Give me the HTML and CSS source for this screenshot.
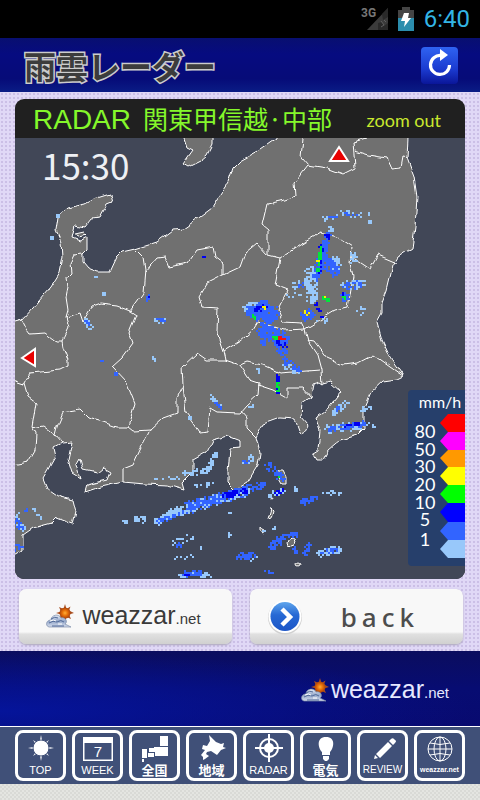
FILE: index.html
```html
<!DOCTYPE html>
<html lang="ja">
<head>
<meta charset="UTF-8">
<meta name="viewport" content="width=device-width">
<title>雨雲レーダー</title>
<link rel="stylesheet" href="styles.css">
</head>
<body>

<svg class="defs" width="0" height="0" aria-hidden="true">
	<defs>
		<radialGradient id="sunFill"><stop offset="0" stop-color="#ffae35"/><stop offset=".5" stop-color="#e87008"/><stop offset="1" stop-color="#a8430c"/></radialGradient>
		<linearGradient id="cloudFill" x1="0" y1="0" x2="0" y2="1"><stop offset="0" stop-color="#e6edf6"/><stop offset=".5" stop-color="#94a7c9"/><stop offset="1" stop-color="#d5dded"/></linearGradient>
		<linearGradient id="arrowFill" x1="0" y1="0" x2="0" y2="1"><stop offset="0" stop-color="#5fa5ec"/><stop offset=".45" stop-color="#2668d4"/><stop offset="1" stop-color="#1c55c6"/></linearGradient>
	</defs>
	<symbol id="weather" viewBox="0 0 28 25">
		<path d="M19 0l1.500 5 4-2.500-1.500 4L28 9l-5 1.500 2 4.500-4.500-2L19 18l-1.500-5-4.500 2 2-4.500L10 9l5-1.500-2-4.500 4.500 2z" fill="#a94e20"/>
		<circle cx="19" cy="9" r="5.500" fill="url(#sunFill)"/>
		<path d="M3 23C-1 22 0 16 5 16c0-5 8-7 10-2 5-1 7 4 4 6l6 3z" fill="url(#cloudFill)" stroke="#7e8eab" stroke-width=".7"/>
		<path d="M3 19q4-3 8-1 4-3 7 0M5 15q4-3 7-1M6 22h12" fill="none" stroke="#536b99" stroke-width="1"/>
		<path d="M4 17q4-2 6 0M12 20h4" fill="none" stroke="#fff" stroke-width="1"/>
	</symbol>
</svg>

<div class="status">
	<svg class="signal" width="28" height="26" viewBox="0 0 28 26" aria-label="3G">
		<text x="0" y="11">3G</text>
		<path d="M27 2v22H6z" fill="#3b3b3b"/>
		<path d="M27 2v9l-5 3-1-6zM17 24v-7l4-1 2 4 4-3v7z" fill="#292929"/>
		<path d="M20 15l3 4M23 14l2 2M20 21l3-2" stroke="#606060"/>
	</svg>
	<svg class="battery" width="16" height="24" viewBox="0 0 16 24" aria-hidden="true">
		<path d="M4 0h8v3h4v8H0V3h4z" fill="#454545"/>
		<path d="M0 11h16v13H0z" fill="#2b8dad"/>
		<path d="M6 6h5l-1 5h3l-7 9 1-6H3z" fill="#fff"/>
	</svg>
	<span class="clock">6:40</span>
</div>

<header class="header">
	<h1>雨雲レーダー</h1>
	<button type="button" class="reload" aria-label="再読み込み">
		<svg width="24" height="28" viewBox="0 0 24 28" aria-hidden="true">
			<path d="M13 6.500A9.500 9.500 0 1 0 21.500 16" fill="none" stroke="#fff" stroke-width="3.200"/>
			<path d="M12 0l8 6-8 6z" fill="#fff"/>
		</svg>
	</button>
</header>

<main class="main">
	<section class="radar">
		<div class="radar-heading">
			<h2><span>RADAR</span>関東甲信越<i>·</i>中部</h2>
			<a href="#zoomout">zoom out</a>
		</div>
		<svg class="map" viewBox="15 138 450 441">
			<defs>
				<filter id="rough" x="0" y="0" width="1" height="1">
					<feTurbulence type="fractalNoise" baseFrequency=".12" numOctaves="1" seed="4"/>
					<feDisplacementMap in="SourceGraphic" scale="6" xChannelSelector="R" yChannelSelector="G"/>
				</filter>
			</defs>
			<rect x="15" y="138" width="450" height="441" fill="#414757"/>
			<g filter="url(#rough)">
				<rect x="15" y="138" width="450" height="441" fill="none"/>
				<path class="land" d="M8 326L15 322 22 320 33 308 50 288 60 272 63 257 62 243 56 230 58 217 68 208 85 204 97 198 110 194 112 202 107 204 104 210 100 217 92 218 85 227 75 225 72 238 80 241 87 237 87 250 83 254 83 262 88 268 98 272 110 272 117 257 122 252 135 249 157 242 173 230 183 229 200 217 212 208 220 195 228 183 233 168 240 161 260 150 277 138 277 128 408 128 408 138 407 158 414 177 417 197 415 227 412 248 398 257 393 265 387 290 382 303 382 313 377 322 382 340 390 357 403 376 397 379 383 381 370 393 364 407 364 428 357 435 340 440 328 450 323 460 317 460 313 453 318 450 320 430 316 418 325 412 333 402 341 392 330 382 323 384 320 382 313 384 311 397 302 403 301 417 308 425 303 435 300 433 295 419 280 418 263 424 256 437 260 453 258 465 247 483 240 487 235 490 228 483 228 473 230 448 240 447 240 441 227 436 213 440 207 452 193 460 193 472 182 483 184 490 167 485 145 484 123 482 100 487 85 492 87 485 107 480 110 472 103 468 97 473 83 470 80 458 76 465 80 478 72 473 68 460 72 442 62 443 53 448 55 457 43 478 47 488 60 497 73 500 76 512 73 524 57 518 52 523 33 528 23 535 23 550 8 559z"/>
				<path class="land" d="M184 130L184 138 187 147 193 150 183 164 188 167 200 161 207 155 212 145 212 130z"/>
				<path class="land" d="M75 234l9-2 3 3-10 2z"/>
				<g class="land">
					<path d="M278 470l5 0 3 6 0 8-4 0-4-7zM271 508l2 2-2 8-3 1zM260 527l4 2-1 4-3-2z"/>
					<circle cx="292" cy="542" r="4"/>
					<circle cx="298" cy="564" r="2"/>
					<circle cx="272" cy="498" r="1"/>
				</g>
				<g class="border">
					<path d="M83 254L74 255 70 263 71 273 67 277 68 287 66 297 68 310 66 317 69 327 62 342 63 348 68 360 68 366 60 370 30 373 24 383 28 397 36 403 32 427 36 433 35 450 28 462 12 465"/>
					<path d="M22 320L27 330 30 334 45 333 57 342 62 342M12 380L24 384"/>
					<path d="M66 317L80 313 83 322 92 307 100 304 117 306 130 311 143 293 145 270 143 257 135 249"/>
					<path d="M130 311L136 315 129 332 133 343 122 358 112 367 127 383 135 403 128 427 117 427 103 422 88 418 80 410 63 413 57 427 55 435 62 443M32 428L43 426 55 435"/>
					<path d="M128 427L133 431 150 430 140 450 133 465 123 469 123 482"/>
					<path d="M150 430L163 418 177 413 177 397 183 385 182 367 197 353 207 360 225 360 240 365M183 385L186 413 195 425 200 433 208 432 210 408 217 412 240 413 247 405 258 395 259 383 250 380 240 365 247 362 263 365 280 373 293 372 320 370"/>
					<path d="M145 272L157 258 165 257 169 267 188 263 197 250 213 247 215 257 223 263 223 275 240 267 245 253 257 243 268 255 280 258"/>
					<path d="M223 275L207 283 199 297 202 307 218 308 217 330 224 351 226 360M224 351L240 341 253 330 258 322 283 330 305 329"/>
					<path d="M268 255L268 230 262 225 267 204 281 201 295 196 294 183 308 165 301 157 303 138M308 165L327 168 343 174 355 168 353 142 367 138M355 151L368 155 387 158 392 169 401 168 403 157 408 158"/>
					<path d="M280 258L300 245 320 233 337 237 352 247 350 263 353 277 348 308 335 311 320 320 305 329 302 323 283 322 278 310 288 290 275 285 280 258M352 257L370 269 378 255 397 263"/>
					<path d="M305 329L308 340 318 355 322 370 323 384M308 340L314 341 327 358 343 365 358 363 373 355 390 367 403 376"/>
					<path d="M258 385L273 390 287 398 287 388 303 388 311 397M241 410L247 417 247 428 256 437"/>
				</g>
			</g>
			<g id="echo" class="echo"></g>
			<a href="#north" aria-label="北"><path class="pointer" d="M339 147l9 14h-18z"/></a>
			<a href="#west" aria-label="西"><path class="pointer" d="M22 358l13-9v17z"/></a>
			<text class="time" x="42" y="180">15:30</text>
			<g class="legend">
				<rect x="408" y="390" width="62" height="176" rx="4" fill="#263f6b"/>
				<text class="unit" x="440" y="408">mm/h</text>
				<path fill="#f00" d="M440 423l8-9h17v18h-17z"/>
				<path fill="#f0f" d="M440 441l8-9h17v18h-17z"/>
				<path fill="#f90" d="M440 458l8-8h17v17h-17z"/>
				<path fill="#ff0" d="M440 476l8-9h17v18h-17z"/>
				<path fill="#0f0" d="M440 494l8-9h17v18h-17z"/>
				<path fill="#00f" d="M440 512l8-9h17v19h-17z"/>
				<path fill="#3264ff" d="M440 531l8-9h17v18h-17z"/>
				<path fill="#98c8fa" d="M440 549l8-9h17v18h-17z"/>
				<text x="425" y="438">80</text>
				<text x="425" y="456">50</text>
				<text x="425" y="473">30</text>
				<text x="425" y="491">20</text>
				<text x="425" y="509">10</text>
				<text x="425" y="526">5</text>
				<text x="425" y="546">1</text>
			</g>
		</svg>
	</section>

	<div class="buttons">
		<a class="button" href="#weazzar">
			<svg width="28" height="25" aria-hidden="true"><use href="#weather"/></svg>
			<span class="logo">weazzar<small>.net</small></span>
		</a>
		<button type="button" class="button back">
			<svg width="36" height="36" viewBox="0 0 36 36" aria-hidden="true">
				<circle cx="18" cy="18.500" r="17" fill="#d0d0d0"/>
				<circle cx="18" cy="17.500" r="16.500" fill="#fff"/>
				<circle cx="18" cy="17.500" r="14.500" fill="url(#arrowFill)"/>
				<path d="M15 10l8 8-8 8" fill="none" stroke="#fff" stroke-width="4.500"/>
			</svg>
			<span>back</span>
		</button>
	</div>
</main>

<footer class="footer">
	<svg width="28" height="25" aria-hidden="true"><use href="#weather"/></svg>
	<span class="logo">weazzar<small>.net</small></span>
</footer>

<nav class="nav">
	<a href="#top">
		<svg viewBox="0 0 28 28" aria-hidden="true"><path d="M14 1l1.500 8h-3zM14 27l1.500-8h-3zM1 14l8-1.500v3zM27 14l-8-1.500v3zM6 6l6 4-2 2zM22 6l-6 4 2 2zM6 22l6-4-2-2zM22 22l-6-4 2-2z"/><circle cx="14" cy="14" r="8" stroke="#405078"/><circle cx="14" cy="14" r="6.500"/></svg>
		<span>TOP</span>
	</a>
	<a href="#week">
		<svg class="wide" viewBox="0 0 32 28" aria-hidden="true"><path d="M1 3h30v24H1zM2.500 9v16.500h27V9z" fill-rule="evenodd"/><text x="16" y="23">7</text></svg>
		<span>WEEK</span>
	</a>
	<a href="#japan">
		<svg viewBox="0 0 28 28" aria-hidden="true"><path d="M19 2h8v10h-8zM13 13h14v9H14v-4H8v-4h5zM7 19h6v4H7zM1 15h5v9H1zM1 25h2v3H1z"/></svg>
		<span class="ja">全国</span>
	</a>
	<a href="#area">
		<svg viewBox="0 0 28 28" aria-hidden="true"><path d="M11 1l7 7 5 2 3-1-1 4 3 1-5 2-4 5-6-4-4 1-1 2 3 2-4 3-2 1 0-3-2-2 4-5-3-1 1-4 4 1 3-5z"/></svg>
		<span class="ja">地域</span>
	</a>
	<a href="#radar" class="active">
		<svg viewBox="0 0 28 28" aria-hidden="true"><circle cx="14" cy="14" r="9" fill="none" stroke="#fff" stroke-width="2"/><circle cx="14" cy="14" r="5"/><path d="M13 0h2v10h-2zM13 18h2v10h-2zM0 13h10v2H0zM18 13h10v2H18z"/></svg>
		<span>RADAR</span>
	</a>
	<a href="#power">
		<svg viewBox="0 0 28 28" aria-hidden="true"><path d="M14 3c-10 0-8 11-4 15v3h8v-3c4-4 6-15-4-15zM11 22h6v3l-2 2h-2l-2-2z"/></svg>
		<span class="ja">電気</span>
	</a>
	<a href="#review">
		<svg viewBox="0 0 28 28" aria-hidden="true"><path d="M19 8l4 4L11 24l-4-4zM20 7l2-2q2-2 4 1 2 1 0 3l-2 2zM6 21l3 3-4 1z"/></svg>
		<span class="long">REVIEW</span>
	</a>
	<a href="#net">
		<svg viewBox="0 0 28 28" aria-hidden="true"><g fill="none" stroke="#fff"><circle cx="14" cy="15" r="12"/><ellipse cx="14" cy="15" rx="6" ry="12"/><path d="M14 3v24M2 15h24M4 9q10 3 20 0M4 21q10-3 20 0"/></g></svg>
		<span class="tiny">weazzar.net</span>
	</a>
</nav>

<script src="radar.js"></script>
</body>
</html>
```
FILE: styles.css
```css
* {
	box-sizing: border-box;
}

body {
	margin: 0;
	min-height: 100vh;
	background: repeating-conic-gradient(#d9dad6 0 25%, #e4e5e1 0 50%) 0 0 / 4px 4px;
	font-family: "Liberation Sans", "Noto Sans CJK JP", sans-serif;
}

a {
	color: inherit;
	text-decoration: none;
}

.defs {
	position: absolute;
}

.status {
	display: flex;
	justify-content: flex-end;
	align-items: center;
	height: 38px;
	padding-right: 10px;
	background: #000;
}

.signal text {
	font: bold 12px Roboto, sans-serif;
	fill: #777;
}

.battery {
	margin: 0 10px 0 9px;
}

.clock {
	font: 24px Roboto, sans-serif;
	color: #33b5e5;
}

.header {
	display: flex;
	justify-content: space-between;
	align-items: center;
	height: 54px;
	padding: 0 22px 0 24px;
	background: linear-gradient(#080f70, #060b80 30%, #060b78 75%, #0a1c85);
}

.header h1 {
	margin: 0;
	font: bold 32px/40px "Noto Sans CJK JP", sans-serif;
	color: #3c3c3c;
	-webkit-text-stroke: 3px #ccc;
	paint-order: stroke fill;
}

.reload {
	display: flex;
	justify-content: center;
	align-items: center;
	width: 37px;
	height: 37px;
	padding: 0 0 5px;
	border: 0;
	border-radius: 4px;
	background: linear-gradient(#2f63f2, #1b3bd0 60%, #0a1699);
}

.main {
	padding: 7px 15px;
	background: radial-gradient(circle, #cbbfe6 1px, transparent 1px) 0 0 / 4px 4px, #e0d8f6;
}

.radar {
	border-radius: 9px;
	background: #202020;
	overflow: hidden;
}

.radar-heading {
	display: flex;
	justify-content: space-between;
	align-items: center;
	height: 39px;
	padding: 0 24px 0 18px;
}

.radar-heading h2 {
	margin: 0;
	font: 25px/39px "Noto Sans CJK JP", sans-serif;
	color: #85f82b;
	white-space: nowrap;
}

.radar-heading h2 span {
	margin-right: 12px;
	font: 28px "Liberation Sans", sans-serif;
}

.radar-heading h2 i {
	font-style: normal;
}

.radar-heading a {
	padding-top: 2px;
	font: 18px Lato, sans-serif;
	color: #c9e82e;
}

.map {
	display: block;
	width: 100%;
	height: auto;
}

.land {
	fill: #707070;
	stroke: #fff;
	stroke-width: 1;
}

.border {
	fill: none;
	stroke: #fff;
	stroke-width: 1;
}

.echo {
	shape-rendering: crispEdges;
}

.pointer {
	fill: #e80000;
	stroke: #fff;
	stroke-width: 2;
}

.time {
	font: 35px "Noto Sans CJK JP", sans-serif;
	fill: #eef0f4;
}

.legend {
	font: 18px Lato, sans-serif;
	fill: #fff;
	text-anchor: middle;
}

.legend .unit {
	font-size: 16px;
}

.buttons {
	display: grid;
	grid-template-columns: 1fr 1fr;
	gap: 18px;
	padding: 10px 2px 0 4px;
}

.button {
	display: flex;
	justify-content: center;
	align-items: center;
	gap: 8px;
	height: 55px;
	padding: 0 4px 0 0;
	border: 0;
	border-radius: 7px;
	background: linear-gradient(#f8f8f8 78%, #e0e0e0 82%, #d0d0d0);
	box-shadow: 0 1px 2px #aaa5b8;
	color: #3a3a3a;
}

.logo {
	font-size: 25px;
	line-height: 30px;
}

.logo small {
	font-size: 15px;
}

.back {
	justify-content: space-between;
	padding: 0 44px 0 17px;
	color: #4d4d4d;
}

.back span {
	font: 500 26px "Noto Sans", sans-serif;
	letter-spacing: 5px;
}

.footer {
	display: flex;
	justify-content: flex-end;
	align-items: center;
	gap: 2px;
	height: 75px;
	padding: 4px 31px 0 0;
	background: radial-gradient(ellipse at 0 80%, #05149a, transparent 70%), linear-gradient(#0b0d5e, #070c72 50%, #080a70);
	color: #e6e8ff;
}

.nav {
	display: flex;
	justify-content: center;
	gap: 6px;
	padding: 3px 14px;
	border-top: 1px solid #fff;
	background: #405078;
	color: #fff;
}

.nav a {
	display: flex;
	flex: 0 1 51px;
	flex-direction: column;
	align-items: center;
	height: 51px;
	min-width: 0;
	border: 3px solid #fff;
	border-radius: 8px;
	font-size: 11px;
	line-height: 16px;
}

.nav svg {
	width: 28px;
	height: 28px;
	margin-top: 1px;
	fill: #fff;
}

.nav .wide {
	width: 32px;
}

.nav text {
	font-size: 15px;
	text-anchor: middle;
}

.nav .ja {
	font: bold 13px/16px "Noto Sans CJK JP", sans-serif;
}

.nav .long {
	font-size: 10px;
}

.nav .tiny {
	font-size: 7px;
	font-weight: bold;
}
```
FILE: radar.js
```js
var CELL = 2;
var colors = ["#98c8fa", "#3264ff", "#0000f0", "#00e63c", "#f5f000", "#f01414"];

// level, x1, y1, x2, y2, radius, density
var bands = [
	[0, 323, 219, 337, 217, 2, .6], [1, 329, 218, 336, 217, 1, .7],
	[0, 344, 211, 358, 216, 4, .5], [1, 346, 213, 356, 215, 2, .5],
	[0, 369, 214, 369, 215, 1, 1], [0, 369, 222, 370, 222, 1, 1],
	[0, 331, 229, 330, 232, 3, .9], [1, 328, 236, 320, 262, 4, .9], [1, 320, 262, 316, 276, 5, .8],
	[1, 326, 262, 334, 270, 7, .9], [0, 336, 259, 337, 268, 5, .8],
	[2, 327, 236, 328, 237, 2, 1], [2, 321, 247, 319, 272, 2, .9], [3, 321, 248, 319, 264, 1, 1],
	[3, 318, 270, 318, 271, 1, 1], [4, 318, 261, 318, 261, 1, 1],
	[0, 311, 273, 312, 298, 6, .8], [0, 295, 286, 305, 282, 4, .6], [1, 299, 286, 303, 285, 2, .6],
	[0, 288, 296, 300, 294, 2, .5], [3, 323, 298, 328, 300, 1, 1], [4, 324, 298, 326, 299, 1, .7],
	[0, 353, 255, 355, 261, 4, .6], [0, 346, 285, 363, 285, 5, .6], [1, 346, 286, 358, 285, 4, .5],
	[1, 344, 296, 346, 298, 4, .8], [2, 343, 295, 345, 296, 2, .8], [3, 344, 297, 345, 298, 1, .8],
	[1, 306, 316, 309, 315, 6, .8], [4, 306, 312, 308, 314, 2, .8], [3, 304, 313, 309, 314, 2, .4],
	[0, 319, 320, 326, 320, 3, .5], [2, 316, 304, 322, 318, 2, .4], [0, 360, 311, 362, 308, 4, .4],
	[0, 249, 309, 263, 306, 6, .8], [1, 256, 312, 270, 314, 9, .9], [1, 268, 318, 264, 306, 6, .8],
	[2, 256, 310, 265, 307, 3, .6], [3, 253, 315, 255, 319, 1, 1], [4, 264, 307, 265, 308, 1, .8],
	[1, 265, 330, 281, 340, 8, .9], [1, 262, 342, 263, 343, 3, .9], [1, 280, 345, 282, 351, 5, .7],
	[2, 276, 342, 286, 346, 3, .5], [3, 274, 337, 280, 338, 2, .9], [5, 280, 338, 284, 339, 1, 1],
	[0, 287, 367, 297, 371, 4, .6], [1, 285, 360, 298, 370, 4, .6], [2, 278, 377, 278, 392, 2, .9], [3, 278, 384, 278, 391, 1, .9],
	[2, 204, 257, 204, 257, 1, 1], [1, 149, 296, 148, 299, 2, 1], [2, 149, 297, 149, 297, 1, 1],
	[0, 155, 321, 164, 320, 3, .6], [1, 158, 319, 163, 320, 2, .7], [0, 86, 320, 90, 327, 3, .7], [1, 86, 321, 89, 325, 1, .7],
	[0, 57, 216, 58, 216, 1, 1], [0, 51, 237, 52, 238, 1, 1], [0, 96, 277, 96, 277, 1, 1], [0, 104, 294, 104, 294, 1, 1],
	[1, 102, 361, 102, 361, 2, 1], [1, 115, 373, 117, 374, 2, 1], [0, 153, 358, 155, 360, 1, 1],
	[0, 211, 397, 220, 406, 2, .8], [1, 216, 403, 220, 408, 1, .8], [0, 189, 418, 190, 418, 1, 1],
	[0, 16, 516, 21, 528, 4, .6], [1, 15, 520, 21, 528, 3, .6], [1, 16, 548, 20, 548, 4, .6], [0, 33, 507, 41, 518, 2, .7], [1, 25, 509, 27, 511, 2, .8],
	[0, 125, 521, 126, 522, 2, 1], [0, 138, 520, 142, 520, 4, .7],
	[0, 158, 521, 178, 510, 4, .8], [0, 178, 512, 245, 491, 5, .8], [1, 159, 521, 245, 493, 3, .5], [1, 187, 506, 262, 485, 4, .7], [2, 225, 496, 246, 491, 3, .7],
	[0, 156, 480, 178, 478, 2, .3], [0, 184, 473, 207, 471, 3, .6], [0, 209, 470, 215, 455, 3, .8], [0, 197, 487, 213, 483, 3, .4],
	[0, 247, 461, 251, 458, 4, .6], [1, 244, 463, 248, 462, 2, .6], [1, 268, 466, 274, 470, 4, .7],
	[1, 278, 474, 282, 479, 4, .7], [3, 279, 477, 279, 477, 1, 1], [0, 270, 496, 282, 491, 3, .7], [2, 276, 493, 283, 491, 2, .8],
	[0, 295, 488, 296, 490, 1, 1], [1, 302, 503, 315, 498, 3, .7], [0, 324, 492, 338, 493, 3, .5],
	[0, 231, 513, 231, 513, 2, 1], [0, 229, 535, 230, 535, 2, 1], [0, 175, 543, 190, 537, 4, .3], [1, 178, 545, 180, 545, 2, 1],
	[0, 176, 559, 192, 556, 2, .5], [0, 201, 548, 201, 548, 1, 1], [0, 181, 575, 210, 575, 3, .6], [1, 186, 574, 200, 573, 3, .8], [2, 186, 575, 188, 575, 1, 1],
	[1, 240, 557, 253, 556, 4, .7], [0, 242, 557, 254, 558, 3, .4], [1, 273, 546, 280, 540, 4, .8], [1, 280, 538, 296, 534, 3, .7],
	[1, 294, 549, 296, 552, 2, .9], [1, 306, 553, 309, 545, 3, .9], [0, 320, 553, 338, 550, 4, .7], [1, 323, 551, 335, 551, 3, .5],
	[1, 267, 571, 271, 572, 3, .7], [0, 265, 531, 275, 528, 2, .4],
	[0, 334, 412, 347, 403, 3, .7], [1, 337, 409, 341, 407, 2, .7], [0, 363, 410, 370, 409, 3, .6],
	[0, 329, 429, 358, 426, 4, .7], [1, 329, 429, 363, 424, 3, .7], [2, 345, 426, 358, 424, 2, .6], [0, 369, 425, 374, 426, 2, .7],
	[0, 258, 370, 259, 373, 1, .8], [0, 249, 406, 252, 406, 2, .6]
];

var seed = 7;
function random() {
	seed = (seed * 16807) % 2147483647;
	return seed / 2147483647;
}

function distance(px, py, x1, y1, x2, y2) {
	var dx = x2 - x1, dy = y2 - y1;
	var len = dx * dx + dy * dy;
	var t = len ? ((px - x1) * dx + (py - y1) * dy) / len : 0;
	t = Math.max(0, Math.min(1, t));
	return Math.hypot(px - x1 - t * dx, py - y1 - t * dy);
}

var echo = document.getElementById("echo");
bands.sort(function(a, b) { return a[0] - b[0]; });
bands.forEach(function(b) {
	var r = b[5], d = "";
	var left = Math.floor((Math.min(b[1], b[3]) - r) / CELL) * CELL;
	var top = Math.floor((Math.min(b[2], b[4]) - r) / CELL) * CELL;
	for (var y = top; y <= Math.max(b[2], b[4]) + r; y += CELL) {
		for (var x = left; x <= Math.max(b[1], b[3]) + r; x += CELL) {
			var reach = Math.max(r * (.7 + random() * .5), 1.5);
			var near = distance(x + 1, y + 1, b[1], b[2], b[3], b[4]) <= reach;
			if (near && random() < b[6]) {
				d += "M" + x + " " + y + "h2v2h-2z";
			}
		}
	}
	var path = document.createElementNS("http://www.w3.org/2000/svg", "path");
	path.setAttribute("d", d);
	path.setAttribute("fill", colors[b[0]]);
	echo.appendChild(path);
});
```
